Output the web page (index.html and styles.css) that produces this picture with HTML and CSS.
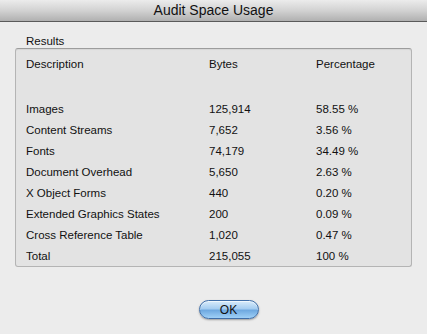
FILE: index.html
```html
<!DOCTYPE html>
<html lang="en">
<head>
    <meta charset="UTF-8">
    <title>Audit Space Usage</title>
    <link rel="stylesheet" href="styles.css">
</head>
<body>
    <div class="dialog">
        <div class="title-bar">Audit Space Usage</div>

        <div class="dialog-body">
            <div class="group-label">Results</div>
            <div class="group-box">
                <div class="row head-row">
                    <span>Description</span>
                    <span>Bytes</span>
                    <span>Percentage</span>
                </div>
                <div class="row"><span>Images</span><span>125,914</span><span>58.55 %</span></div>
                <div class="row"><span>Content Streams</span><span>7,652</span><span>3.56 %</span></div>
                <div class="row"><span>Fonts</span><span>74,179</span><span>34.49 %</span></div>
                <div class="row"><span>Document Overhead</span><span>5,650</span><span>2.63 %</span></div>
                <div class="row"><span>X Object Forms</span><span>440</span><span>0.20 %</span></div>
                <div class="row"><span>Extended Graphics States</span><span>200</span><span>0.09 %</span></div>
                <div class="row"><span>Cross Reference Table</span><span>1,020</span><span>0.47 %</span></div>
                <div class="row"><span>Total</span><span>215,055</span><span>100 %</span></div>
            </div>
        </div>

        <div class="button-row">
            <button class="ok-button">OK</button>
        </div>
    </div>
</body>
</html>
```

FILE: styles.css
```css
* {
    margin: 0;
    padding: 0;
    box-sizing: border-box;
}

body {
    font-family: 'Liberation Sans', Arial, sans-serif;
    font-size: 11.5px;
    color: #111;
    background: #ececec;
    width: 427px;
    height: 334px;
    overflow: hidden;
}

.dialog {
    display: flex;
    flex-direction: column;
    height: 100%;
}

.title-bar {
    height: 22px;
    line-height: 21px;
    text-align: center;
    font-size: 14px;
    color: #111;
    background: linear-gradient(#ececec, #d2d2d2 50%, #b0b0b0);
    border-bottom: 1px solid #5a5a5a;
}

.dialog-body {
    padding: 12px 15px 0 15px;
}

.group-label {
    padding-left: 11px;
    height: 14px;
    line-height: 14px;
}

.group-box {
    background: #e3e3e3;
    border: 1px solid #b4b4b4;
    border-top-color: #9c9c9c;
    border-radius: 3px;
    padding: 5px 0 0 10px;
    box-shadow: inset 0 1px 1px rgba(0, 0, 0, 0.06);
}

.row {
    display: grid;
    grid-template-columns: 183px 107px 1fr;
    height: 21px;
    line-height: 22px;
}

.head-row {
    line-height: 21px;
    margin-bottom: 23px;
}

.button-row {
    display: flex;
    justify-content: center;
    padding-left: 30px;
    margin-top: 33px;
}

.ok-button {
    width: 60px;
    height: 19px;
    border-radius: 10px;
    border: 1px solid #3f6ea8;
    background: linear-gradient(#d9ecfb, #a5cdf1 45%, #6fa9e0 55%, #9fd0f7);
    box-shadow: 0 1px 2px rgba(0, 0, 0, 0.35), inset 0 1px 0 rgba(255, 255, 255, 0.6);
    font-family: 'Liberation Sans', Arial, sans-serif;
    font-size: 12px;
    color: #111;
    cursor: pointer;
}
```
